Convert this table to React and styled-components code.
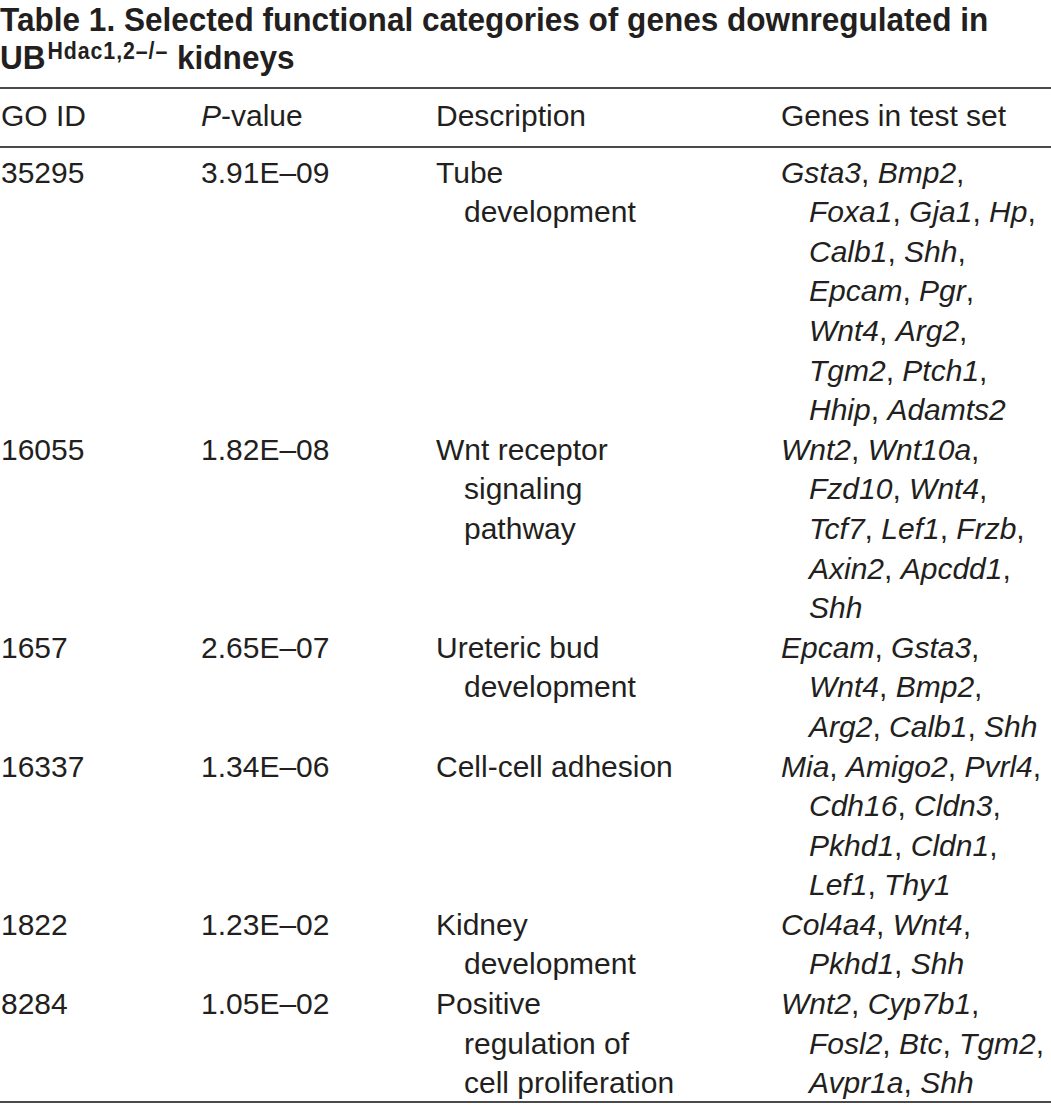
import styled, { createGlobalStyle } from "styled-components";

const GlobalStyle = createGlobalStyle`
  html, body {
    margin: 0;
    padding: 0;
    background: #fff;
  }
  body {
    font-family: "Liberation Sans", Arial, sans-serif;
    color: #231f20;
  }
`;

const Page = styled.div`
  width: 1051px;
  overflow: hidden;
`;

// the original heading is set in a condensed bold face; squeeze Liberation Sans Bold to match
const Title = styled.h1`
  margin: 0;
  width: 1140px;
  white-space: nowrap;
  transform: scaleX(0.928);
  transform-origin: left top;
  font-family: "Liberation Sans", Arial, sans-serif;
  font-weight: 700;
  font-size: 34px;
  line-height: 38px;
  color: #231f20;
`;

const Sup = styled.sup`
  font-size: 23px;
  line-height: 0;
  vertical-align: 10px;
  letter-spacing: 1px;
  margin-left: 2px;
`;

const Table = styled.div`
  margin-top: 11px;
  border-top: 2px solid #4a4a4a;
  border-bottom: 2px solid #4a4a4a;
  font-size: 30px;
  line-height: 39.6px;
`;

const Row = styled.div`
  display: grid;
  grid-template-columns: 200px 235px 345px 1fr;
  padding: ${(p) => (p.$head ? "7px 0 10px" : "0")};
  border-bottom: ${(p) => (p.$head ? "2px solid #4a4a4a" : "none")};
`;

const Body = styled.div`
  padding-top: 5px;
  margin-bottom: -2px;
`;

const Cell = styled.div`
  padding-left: 1px;
  white-space: nowrap;
`;

const Line = styled.div`
  padding-left: ${(p) => (p.$indent ? "28px" : "0")};
`;

const Gene = styled.i`
  font-style: italic;
`;

const rows = [
  {
    id: "35295",
    p: "3.91E–09",
    desc: ["Tube", "development"],
    genes: [
      ["Gsta3", "Bmp2"],
      ["Foxa1", "Gja1", "Hp"],
      ["Calb1", "Shh"],
      ["Epcam", "Pgr"],
      ["Wnt4", "Arg2"],
      ["Tgm2", "Ptch1"],
      ["Hhip", "Adamts2"],
    ],
  },
  {
    id: "16055",
    p: "1.82E–08",
    desc: ["Wnt receptor", "signaling", "pathway"],
    genes: [
      ["Wnt2", "Wnt10a"],
      ["Fzd10", "Wnt4"],
      ["Tcf7", "Lef1", "Frzb"],
      ["Axin2", "Apcdd1"],
      ["Shh"],
    ],
  },
  {
    id: "1657",
    p: "2.65E–07",
    desc: ["Ureteric bud", "development"],
    genes: [
      ["Epcam", "Gsta3"],
      ["Wnt4", "Bmp2"],
      ["Arg2", "Calb1", "Shh"],
    ],
  },
  {
    id: "16337",
    p: "1.34E–06",
    desc: ["Cell-cell adhesion"],
    genes: [
      ["Mia", "Amigo2", "Pvrl4"],
      ["Cdh16", "Cldn3"],
      ["Pkhd1", "Cldn1"],
      ["Lef1", "Thy1"],
    ],
  },
  {
    id: "1822",
    p: "1.23E–02",
    desc: ["Kidney", "development"],
    genes: [
      ["Col4a4", "Wnt4"],
      ["Pkhd1", "Shh"],
    ],
  },
  {
    id: "8284",
    p: "1.05E–02",
    desc: ["Positive", "regulation of", "cell proliferation"],
    genes: [
      ["Wnt2", "Cyp7b1"],
      ["Fosl2", "Btc", "Tgm2"],
      ["Avpr1a", "Shh"],
    ],
  },
];

const GeneLines = ({ lines }) =>
  lines.map((names, i) => {
    const last = i === lines.length - 1;
    return (
      <Line key={i} $indent={i > 0}>
        {names.map((n, j) => (
          <span key={n}>
            <Gene>{n}</Gene>
            {last && j === names.length - 1 ? "" : ", "}
          </span>
        ))}
      </Line>
    );
  });

const App = () => (
  <>
    <GlobalStyle />
    <Page>
      <Title>
        Table 1. Selected functional categories of genes downregulated in
        <br />
        UB<Sup>Hdac1,2–/–</Sup> kidneys
      </Title>
      <Table>
        <Row $head>
          <Cell>GO ID</Cell>
          <Cell>
            <Gene>P</Gene>-value
          </Cell>
          <Cell>Description</Cell>
          <Cell>Genes in test set</Cell>
        </Row>
        <Body>
          {rows.map((r) => (
            <Row key={r.id}>
              <Cell>{r.id}</Cell>
              <Cell>{r.p}</Cell>
              <Cell>
                {r.desc.map((d, i) => (
                  <Line key={i} $indent={i > 0}>
                    {d}
                  </Line>
                ))}
              </Cell>
              <Cell>
                <GeneLines lines={r.genes} />
              </Cell>
            </Row>
          ))}
        </Body>
      </Table>
    </Page>
  </>
);

export default App;
